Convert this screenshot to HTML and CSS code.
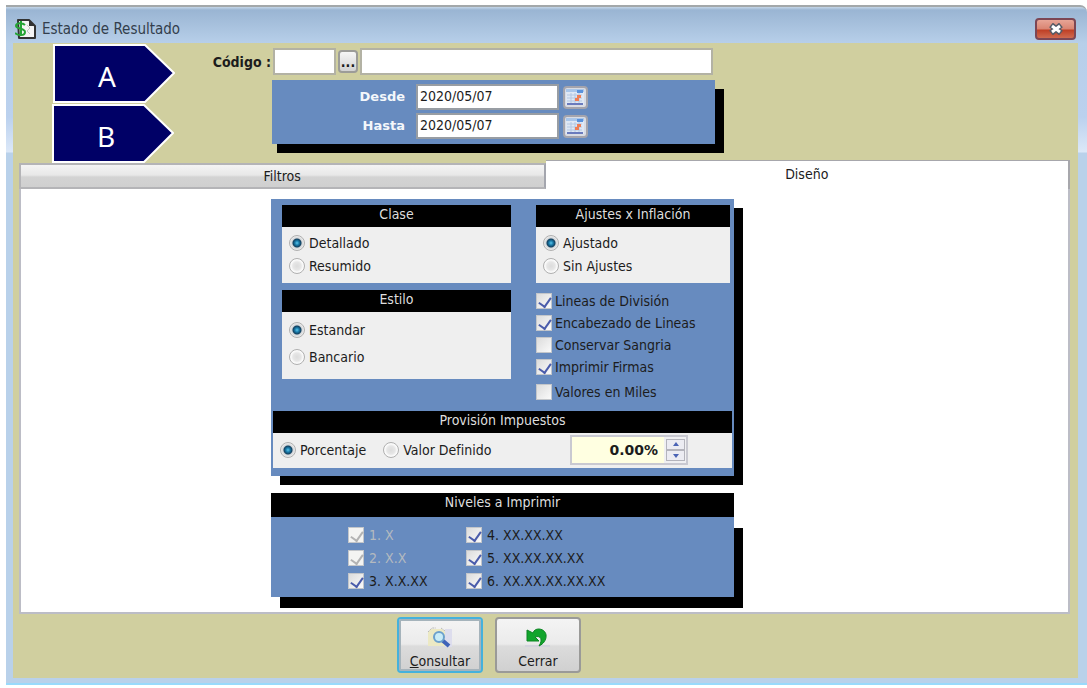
FILE: index.html
```html
<!DOCTYPE html>
<html lang="es">
<head>
    <meta charset="UTF-8">
    <meta name="viewport" content="width=device-width, initial-scale=1.0">
    <title>Estado de Resultado</title>
    <link rel="stylesheet" href="styles.css">
</head>
<body>
    <div class="window">
        <!-- Title bar -->
        <header class="title-bar">
            <svg class="title-icon" width="21" height="21" viewBox="0 0 21 21">
                <path d="M3 1h11l6 6v12H4z" fill="#f4f4f4" stroke="#333" stroke-width="2" stroke-linejoin="round"/>
                <path d="M14 1v6h6z" fill="#333"/>
                <path d="M12 6l3 3-3 3 3 3" fill="none" stroke="#c4c4c4" stroke-width="1"/>
                <path d="M10 6C7 3 1 4 1 7s9 2 9 6-7 4-10 1M6 2v15" fill="none" stroke="#25a435" stroke-width="2"/>
            </svg>
            <h1>Estado de Resultado</h1>
            <button class="close-btn" type="button" aria-label="Cerrar ventana">
                <svg width="16" height="12" viewBox="0 0 16 12">
                    <path d="M3 2l10 8M13 2l-10 8" stroke="#555b66" stroke-width="6"/>
                    <path d="M4 3l8 6M12 3l-8 6" stroke="#fff" stroke-width="3"/>
                </svg>
            </button>
        </header>

        <form class="client">
            <!-- Callouts -->
            <div class="callout callout-a">
                <svg width="122" height="60" viewBox="0 0 122 60"><path d="M1 1H92L121 29L92 58H1z"/></svg>
                <span>A</span>
            </div>
            <div class="callout callout-b">
                <svg width="122" height="60" viewBox="0 0 122 60"><path d="M1 1H92L121 29L92 58H1z"/></svg>
                <span>B</span>
            </div>

            <!-- Filter header -->
            <div class="code-row">
                <label for="codigo">Código :</label>
                <input type="text" id="codigo" class="code">
                <button type="button" class="browse-btn" aria-label="Buscar">...</button>
                <input type="text" class="code-name" aria-label="Nombre">
            </div>
            <div class="dates">
                <label for="desde">Desde</label>
                <input type="text" id="desde" value="2020/05/07">
                <button type="button" class="calendar-btn" aria-label="Calendario desde">
                    <svg width="20" height="18" viewBox="0 0 20 18">
                        <path d="M1 1h18v16H1z" fill="#dfe8f5"/>
                        <path d="M1 1h18v3H1z" fill="#a9c6ea"/>
                        <path d="M12 2h6v3h-6z" fill="#5a92dc"/>
                        <path d="M2 7h15M2 10h15M2 13h15M6 5v10M10 5v10M14 5v10" stroke="#b3c8e4"/>
                        <path d="M12 7h4v3h-2v3h-4v-3h2z" fill="#ee7d55"/>
                        <path d="M2 16h16" stroke="#6a7bbd" stroke-width="2"/>
                    </svg>
                </button>
                <label for="hasta">Hasta</label>
                <input type="text" id="hasta" value="2020/05/07">
                <button type="button" class="calendar-btn" aria-label="Calendario hasta">
                    <svg width="20" height="18" viewBox="0 0 20 18">
                        <path d="M1 1h18v16H1z" fill="#dfe8f5"/>
                        <path d="M1 1h18v3H1z" fill="#a9c6ea"/>
                        <path d="M12 2h6v3h-6z" fill="#5a92dc"/>
                        <path d="M2 7h15M2 10h15M2 13h15M6 5v10M10 5v10M14 5v10" stroke="#b3c8e4"/>
                        <path d="M12 7h4v3h-2v3h-4v-3h2z" fill="#ee7d55"/>
                        <path d="M2 16h16" stroke="#6a7bbd" stroke-width="2"/>
                    </svg>
                </button>
            </div>

            <!-- Tabs -->
            <div class="tabs" role="tablist">
                <button type="button" class="tab" role="tab" aria-selected="false">Filtros</button>
                <button type="button" class="tab active" role="tab" aria-selected="true">Diseño</button>
            </div>
            <div class="tab-page" role="tabpanel">
                <div class="panel">
                    <div class="columns">
                        <div class="column">
                            <fieldset class="group">
                                <legend>Clase</legend>
                                <label><input type="radio" name="clase" checked>Detallado</label>
                                <label><input type="radio" name="clase">Resumido</label>
                            </fieldset>
                            <fieldset class="group spaced">
                                <legend>Estilo</legend>
                                <label><input type="radio" name="estilo" checked>Estandar</label>
                                <label><input type="radio" name="estilo">Bancario</label>
                            </fieldset>
                        </div>
                        <div class="column">
                            <fieldset class="group">
                                <legend>Ajustes x Inflación</legend>
                                <label><input type="radio" name="ajustes" checked>Ajustado</label>
                                <label><input type="radio" name="ajustes">Sin Ajustes</label>
                            </fieldset>
                            <div class="options">
                                <label><input type="checkbox" checked>Lineas de División</label>
                                <label><input type="checkbox" checked>Encabezado de Lineas</label>
                                <label><input type="checkbox">Conservar Sangria</label>
                                <label><input type="checkbox" checked>Imprimir Firmas</label>
                                <label class="last"><input type="checkbox">Valores en Miles</label>
                            </div>
                        </div>
                    </div>
                    <fieldset class="group tax">
                        <legend>Provisión Impuestos</legend>
                        <div class="tax-row">
                            <label><input type="radio" name="provision" checked>Porcentaje</label>
                            <label><input type="radio" name="provision">Valor Definido</label>
                            <div class="spinner">
                                <input type="text" value="0.00%" aria-label="Valor">
                                <div class="spin-buttons">
                                    <button type="button" aria-label="Subir"><svg width="8" height="5" viewBox="0 0 8 5"><path d="M4 0l3 4H1z"/></svg></button>
                                    <button type="button" aria-label="Bajar"><svg width="8" height="5" viewBox="0 0 8 5"><path d="M4 5l3-4H1z"/></svg></button>
                                </div>
                            </div>
                        </div>
                    </fieldset>
                </div>

                <div class="levels">
                    <h2>Niveles a Imprimir</h2>
                    <div class="levels-grid">
                        <label class="disabled"><input type="checkbox" checked disabled>1. X</label>
                        <label><input type="checkbox" checked>4. XX.XX.XX</label>
                        <label class="disabled"><input type="checkbox" checked disabled>2. X.X</label>
                        <label><input type="checkbox" checked>5. XX.XX.XX.XX</label>
                        <label><input type="checkbox" checked>3. X.X.XX</label>
                        <label><input type="checkbox" checked>6. XX.XX.XX.XX.XX</label>
                    </div>
                </div>
            </div>

            <!-- Actions -->
            <div class="actions">
                <button type="button" class="action-btn default">
                    <svg width="26" height="22" viewBox="0 0 26 22">
                        <path d="M4 2h11l3 3v14H1V5z" fill="#ece9c4"/>
                        <path d="M1 5l4-4h4M14 1l4 3" fill="none" stroke="#b9b9b9" stroke-dasharray="2 1"/>
                        <path d="M18 2h7v18h-7z" fill="#dddded"/>
                        <path d="M15 13l7 6" stroke="#3f63b8" stroke-width="4"/>
                        <circle cx="12" cy="10" r="5" fill="#c9ecf7" stroke="#6ba0cd" stroke-width="2"/>
                    </svg>
                    <span><u>C</u>onsultar</span>
                </button>
                <button type="button" class="action-btn">
                    <svg width="26" height="22" viewBox="0 0 26 22">
                        <path d="M0 19h25" stroke="#d3d3dd" stroke-width="2"/>
                        <path d="M2 3v11h12l-4-4c6-2 8 3 4 9 9-4 10-16 0-17-3 0-5 1-6 4z" fill="#12a52c" stroke="#0b8522"/>
                    </svg>
                    <span>Cerrar</span>
                </button>
            </div>
        </form>
    </div>
</body>
</html>
```
FILE: styles.css
```css
* {
    box-sizing: border-box;
    margin: 0;
    padding: 0;
}

body {
    background-color: white;
    color: #1c1c1c;
    font-family: "DejaVu Sans Condensed", "DejaVu Sans", sans-serif;
    font-stretch: condensed;
    font-size: 14px;
    line-height: 16px;
}

input,
button {
    font: inherit;
    color: inherit;
}

.window {
    margin: 5px 0 3px 6px;
    padding: 0 9px 5px 7px;
    border-top: 2px solid #a3a8aa;
    border-bottom: 2px solid #99dafb;
    border-top-right-radius: 7px;
    background: linear-gradient(#c4d6e8 0, #9ab5d3 3px, #b7cfe9 36px, #bbd1ee 110px, #dce8f8 145px, #b9d1ea 146px);
}

/* Title bar */
.title-bar {
    display: flex;
    align-items: center;
    height: 36px;
    padding: 8px 2px 0 2px;
}

.title-bar h1 {
    flex: 1;
    margin-left: 6px;
    font-size: 15px;
    font-weight: normal;
    color: #333e4c;
}

.close-btn {
    display: flex;
    align-items: center;
    justify-content: center;
    width: 41px;
    height: 22px;
    border: 2px solid #7c4654;
    border-radius: 4px;
    background: linear-gradient(#e8a596 0, #d98472 9px, #bf3f25 10px, #cf6a50 18px);
}

/* Client area */
.client {
    position: relative;
    padding: 5px 8px 5px 6px;
    background-color: #d0cf9f;
}

.callout {
    position: absolute;
    width: 122px;
    height: 60px;
}

.callout-a {
    left: 40px;
    top: 1px;
}

.callout-b {
    left: 39px;
    top: 61px;
}

.callout path {
    fill: #000066;
    stroke: white;
    stroke-width: 2px;
}

.callout span {
    position: absolute;
    left: 0;
    top: 16px;
    width: 108px;
    text-align: center;
    font-family: "Noto Sans", sans-serif;
    font-size: 28px;
    line-height: 32px;
    color: white;
}

input[type="text"] {
    border: 2px solid #b3b2a4;
    background-color: white;
}

.code-row {
    display: flex;
    align-items: center;
    gap: 2px;
    height: 27px;
}

.code-row label {
    width: 252px;
    text-align: right;
    font-weight: bold;
}

.code-row input {
    height: 27px;
}

.code {
    width: 63px;
}

.code-name {
    width: 353px;
}

.browse-btn {
    width: 20px;
    height: 23px;
    border: 2px solid #9c9c98;
    border-radius: 4px;
    background: linear-gradient(#f6f6f6, #d2d2d2);
    font-weight: bold;
    line-height: 12px;
}

.dates {
    display: grid;
    grid-template-columns: 133px 143px 24px;
    align-items: center;
    gap: 3px 0;
    width: 443px;
    margin: 5px 0 16px 253px;
    padding: 4px 0 5px;
    background-color: #678bbf;
    box-shadow: 9px 9px 0 #000, 5px 9px 0 #000;
}

.dates label {
    text-align: right;
    font-family: "DejaVu Sans", sans-serif;
    font-stretch: normal;
    font-size: 13px;
    font-weight: bold;
    color: #f4f7fb;
}

.dates input {
    width: 143px;
    height: 26px;
    margin-left: 11px;
    padding: 0 2px 2px;
    border-color: #989da3;
}

.calendar-btn {
    display: flex;
    width: 25px;
    height: 23px;
    margin-left: 15px;
    border: 2px solid #a4a4ad;
    border-radius: 4px;
    background-color: #d9dce4;
}

/* Tabs */
.tabs {
    display: flex;
    align-items: flex-end;
}

.tab {
    flex: 1;
    height: 26px;
    border: 2px solid #b4b4b7;
    border-right-color: #a4a6ae;
    background: linear-gradient(#f4f4f4 0, #e8e8e8 10px, #d3d3d3 12px, #cfcfcf 24px);
}

.tab.active {
    height: 29px;
    padding-bottom: 2px;
    border: 1px solid #a7a7ac;
    border-right-width: 2px;
    border-left: 0;
    border-bottom: 0;
    background: white;
}

.tab-page {
    padding: 10px 0 15px 250px;
    border: 2px solid #bcbdc6;
    border-top: 0;
    background-color: white;
}

.panel {
    width: 463px;
    padding: 6px 2px 8px;
    background-color: #678bbf;
    box-shadow: 9px 9px 0 #000;
}

.columns {
    display: grid;
    grid-template-columns: 229px 194px;
    gap: 25px;
    padding: 0 9px;
}

.group {
    min-width: 0;
    padding-bottom: 6px;
    border: 0;
    background-color: #efefef;
}

.group legend {
    width: 100%;
    height: 22px;
    margin-bottom: 4px;
    background-color: #000;
    text-align: center;
    line-height: 18px;
    color: #dedede;
}

.group label {
    display: flex;
    align-items: center;
    gap: 4px;
    height: 23px;
    padding-left: 7px;
}

.group.spaced {
    margin-top: 7px;
    padding-bottom: 9px;
}

.spaced label {
    height: 27px;
}

/* Radios and check boxes */
input[type="radio"],
input[type="checkbox"] {
    appearance: none;
    flex: none;
    width: 16px;
    height: 16px;
}

input[type="radio"] {
    border: 1px solid #b0b0b0;
    border-radius: 50%;
    background: radial-gradient(circle, #dcdcdc 0, #e6e6e6 4px, #fafafa 6px);
}

input[type="radio"]:checked {
    background: radial-gradient(circle at 7px 7px, #5cc6ea 0, #1c7fae 2px, #12405f 4px, #d2d5d8 5px, #eee 7px);
}

input[type="checkbox"] {
    position: relative;
    border: 1px solid #c3c6ca;
    background: linear-gradient(135deg, #dcdcdc, #fafafa);
}

input[type="checkbox"]:checked::after {
    content: "";
    position: absolute;
    left: 4px;
    top: 1px;
    width: 6px;
    height: 10px;
    border: solid #4a5cab;
    border-width: 0 2px 2px 0;
    transform: rotate(35deg);
}

input[type="checkbox"]:disabled {
    background: #f4f4f2;
}

input[type="checkbox"]:disabled::after {
    border-color: #b3b3b3;
}

.options {
    margin-top: 7px;
}

.options label {
    display: flex;
    align-items: center;
    gap: 3px;
    height: 22px;
}

.options .last {
    margin-top: 3px;
}

/* Tax provision */
.group.tax {
    margin-top: 8px;
    padding-bottom: 0;
}

.tax legend {
    margin-bottom: 0;
}

.tax-row {
    display: flex;
    align-items: center;
    height: 35px;
    padding-bottom: 2px;
}

.tax-row label + label {
    padding-left: 17px;
}

.spinner {
    display: flex;
    align-items: center;
    gap: 2px;
    width: 118px;
    height: 30px;
    margin: 0 44px 0 auto;
    border: 2px solid #c9c9d1;
    background-color: #f0f0f2;
}

.spinner input[type="text"] {
    width: 92px;
    height: 26px;
    padding-right: 6px;
    border: 0;
    background-color: #ffffe1;
    text-align: right;
    font-family: "DejaVu Sans", sans-serif;
    font-stretch: normal;
    font-weight: bold;
}

.spin-buttons {
    display: flex;
    flex-direction: column;
    width: 19px;
}

.spin-buttons button {
    display: flex;
    align-items: center;
    justify-content: center;
    height: 11px;
    border: 1px solid #b4b4bc;
    background-color: #ececf2;
}

.spin-buttons path {
    fill: #4a63b5;
}

/* Levels */
.levels {
    width: 463px;
    margin-top: 17px;
}

.levels h2 {
    height: 24px;
    background-color: #000;
    text-align: center;
    font-size: 14px;
    font-weight: normal;
    line-height: 19px;
    color: #dedede;
}

.levels-grid {
    display: grid;
    grid-template-columns: 118px 1fr;
    padding: 6px 0 5px 77px;
    background-color: #678bbf;
    box-shadow: 9px 11px 0 #000;
}

.levels-grid label {
    display: flex;
    align-items: center;
    gap: 5px;
    height: 23px;
}

.levels-grid .disabled {
    color: #b4bac0;
}

/* Buttons */
.actions {
    display: flex;
    gap: 12px;
    margin: 3px 0 0 378px;
}

.action-btn {
    display: flex;
    flex-direction: column;
    align-items: center;
    justify-content: flex-end;
    gap: 4px;
    width: 86px;
    height: 56px;
    padding-bottom: 2px;
    border: 2px solid #9a9a98;
    border-radius: 4px;
    background: linear-gradient(#f4f4f4 0, #ebebeb 25px, #dcdcdc 27px, #d0d0d0 52px);
}

.action-btn.default {
    border-color: #45b1dc;
    box-shadow: inset 0 0 0 2px #a5b3bb;
}
```
